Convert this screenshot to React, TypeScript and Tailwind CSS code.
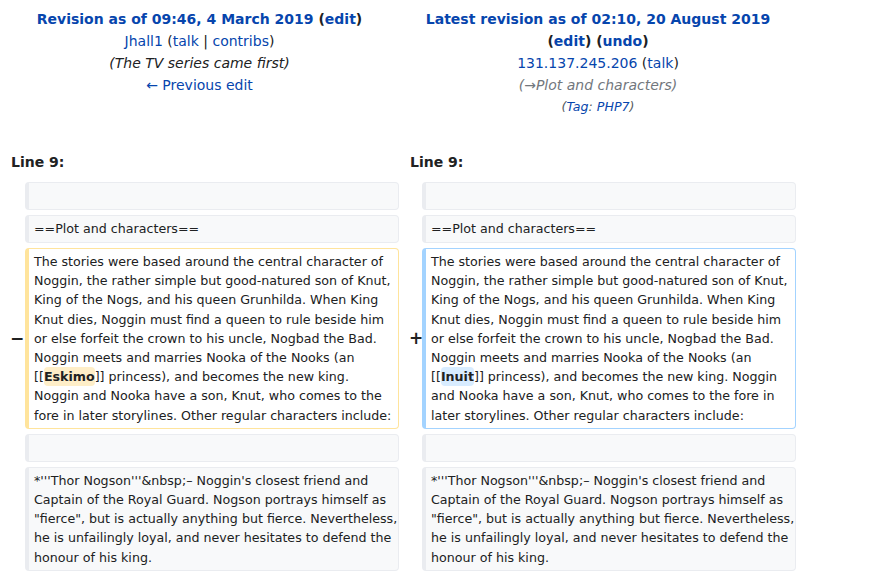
import React from 'react';

const link = 'text-[#0645ad]';

function Box({ kind, children }: { kind: 'ctx' | 'del' | 'add'; children?: React.ReactNode }) {
  const tone =
    kind === 'del'
      ? 'border-[#ffe49c] bg-white'
      : kind === 'add'
        ? 'border-[#a3d3ff] bg-white'
        : 'border-[#eaecf0] bg-[#f8f9fa]';
  return (
    <div
      className={`min-h-[28px] whitespace-nowrap rounded-[4px] border border-l-4 ${tone} pl-[5px] pr-0 py-[3px] text-[12.65px] leading-[19.2px] text-[#202122]`}
    >
      {children}
    </div>
  );
}

function Lines({ lines }: { lines: React.ReactNode[] }) {
  return (
    <>
      {lines.map((l, i) => (
        <div key={i}>{l}</div>
      ))}
    </>
  );
}

function Marker({ sign }: { sign?: string }) {
  return (
    <div className="flex items-center pl-[10px] text-[17px] font-bold text-[#202122]">{sign}</div>
  );
}

const thor = [
  "*'''Thor Nogson'''&nbsp;– Noggin's closest friend and",
  'Captain of the Royal Guard. Nogson portrays himself as',
  '"fierce", but is actually anything but fierce. Nevertheless,',
  'he is unfailingly loyal, and never hesitates to defend the',
  'honour of his king.',
];

const oldText = [
  'The stories were based around the central character of',
  'Noggin, the rather simple but good-natured son of Knut,',
  'King of the Nogs, and his queen Grunhilda. When King',
  'Knut dies, Noggin must find a queen to rule beside him',
  'or else forfeit the crown to his uncle, Nogbad the Bad.',
  'Noggin meets and marries Nooka of the Nooks (an',
  <>
    [[<span className="rounded-[4px] bg-[#feeec8] py-[2px] font-bold">Eskimo</span>]] princess), and becomes the new king.
  </>,
  'Noggin and Nooka have a son, Knut, who comes to the',
  'fore in later storylines. Other regular characters include:',
];

const newText = [
  'The stories were based around the central character of',
  'Noggin, the rather simple but good-natured son of Knut,',
  'King of the Nogs, and his queen Grunhilda. When King',
  'Knut dies, Noggin must find a queen to rule beside him',
  'or else forfeit the crown to his uncle, Nogbad the Bad.',
  'Noggin meets and marries Nooka of the Nooks (an',
  <>
    [[<span className="rounded-[4px] bg-[#d8ecff] py-[2px] font-bold">Inuit</span>]] princess), and becomes the new king. Noggin
  </>,
  'and Nooka have a son, Knut, who comes to the fore in',
  'later storylines. Other regular characters include:',
];

export default function App() {
  return (
    <div className="w-[874px] h-[575px] overflow-hidden bg-white font-['DejaVu_Sans',sans-serif] text-[#202122]">
      <div className="w-[797px]">
        {/* revision headers */}
        <div className="grid grid-cols-[399px_398px] pt-[8px] text-center text-[14px] leading-[22px]">
          <div>
            <div className="font-bold">
              <span className={link}>Revision as of 09:46, 4 March 2019</span> (<span className={link}>edit</span>)
            </div>
            <div>
              <span className={link}>Jhall1</span> (<span className={link}>talk</span> | <span className={link}>contribs</span>)
            </div>
            <div className="italic">(The TV series came first)</div>
            <div className={link}>← Previous edit</div>
          </div>
          <div>
            <div className="font-bold">
              <span className={link}>Latest revision as of 02:10, 20 August 2019</span>
              <br />(<span className={link}>edit</span>) (<span className={link}>undo</span>)
            </div>
            <div>
              <span className={link}>131.137.245.206</span> (<span className={link}>talk</span>)
            </div>
            <div className="italic text-[#72777d]">(→Plot and characters)</div>
            <div className="italic text-[12.6px] text-[#54595d]">
              (<span className={link}>Tag</span>: <span className={link}>PHP7</span>)
            </div>
          </div>
        </div>

        {/* line numbers */}
        <div className="mt-[33px] grid grid-cols-[399px_398px] text-[14px] font-bold leading-[22px]">
          <div className="pl-[11px]">Line 9:</div>
          <div className="pl-[11px]">Line 9:</div>
        </div>

        {/* diff rows */}
        <div className="mt-[9px] grid grid-cols-[25px_374px_23px_374px] gap-y-[5px]">
          <Marker />
          <Box kind="ctx" />
          <Marker />
          <Box kind="ctx" />

          <Marker />
          <Box kind="ctx">==Plot and characters==</Box>
          <Marker />
          <Box kind="ctx">==Plot and characters==</Box>

          <Marker sign="−" />
          <Box kind="del">
            <Lines lines={oldText} />
          </Box>
          <Marker sign="+" />
          <Box kind="add">
            <Lines lines={newText} />
          </Box>

          <Marker />
          <Box kind="ctx" />
          <Marker />
          <Box kind="ctx" />

          <Marker />
          <Box kind="ctx">
            <Lines lines={thor} />
          </Box>
          <Marker />
          <Box kind="ctx">
            <Lines lines={thor} />
          </Box>
        </div>
      </div>
    </div>
  );
}
